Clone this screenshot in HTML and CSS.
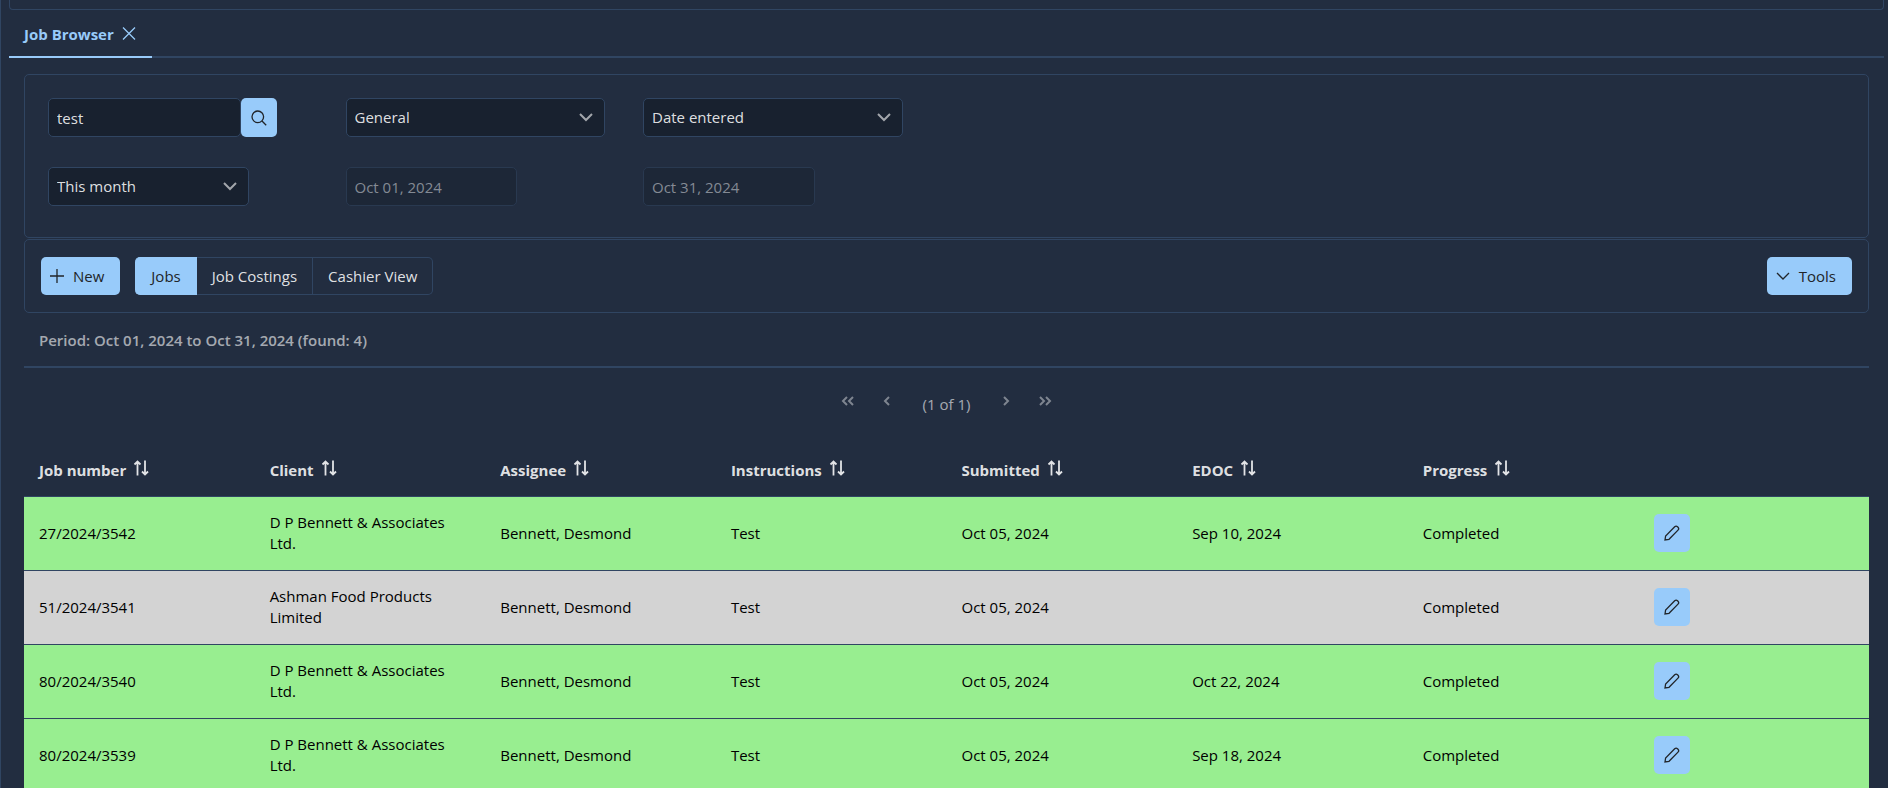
FILE: index.html
```html
<!DOCTYPE html>
<html lang="en">
<head>
<meta charset="utf-8">
<title>Job Browser</title>
<meta name="viewport" content="width=device-width, initial-scale=1">
<link rel="stylesheet" href="styles.css">
</head>
<body>
<svg class="sprite" aria-hidden="true">
  <symbol id="i-chevron" viewBox="0 0 16 16"><path d="M2 5l6 6 6-6"/></symbol>
  <symbol id="i-sort" viewBox="0 0 16 16"><path d="M4.500 15.500V2M1.500 4.500l3-3 3 3M12 .500V14M9 11.500l3 3 3-3"/></symbol>
  <symbol id="i-pencil" viewBox="0 0 16 16"><path d="M1 15l.6-4L10.700 1.800a2 2 0 0 1 2.800 0l.5.500a2 2 0 0 1 0 2.800L5 14.300z"/></symbol>
</svg>
<main class="app">
  <div class="menubar"></div>
  <nav class="tabs">
    <div class="tab">
      <a class="tab-link" href="#jobs">Job Browser</a>
      <button class="tab-close" type="button" aria-label="Close tab"><svg class="icon" viewBox="0 0 16 16"><path d="M2 1.500l12 12M14 1.500l-12 12"/></svg></button>
    </div>
  </nav>
  <section class="content" id="jobs">
    <form class="panel filters">
      <div class="field search">
        <input class="control" type="text" value="test" aria-label="Search text">
        <button class="btn btn-icon" type="button" aria-label="Search"><svg class="icon" viewBox="0 0 16 16"><circle cx="6.800" cy="6.800" r="5.800"/><path d="M11 11l4.200 4.200"/></svg></button>
      </div>
      <div class="field select">
        <select class="control" aria-label="Search type"><option>General</option></select>
        <svg class="icon chevron"><use href="#i-chevron"/></svg>
      </div>
      <div class="field select">
        <select class="control" aria-label="Date field"><option>Date entered</option></select>
        <svg class="icon chevron"><use href="#i-chevron"/></svg>
      </div>
      <div class="field select period">
        <select class="control" aria-label="Period"><option>This month</option></select>
        <svg class="icon chevron"><use href="#i-chevron"/></svg>
      </div>
      <div class="field date"><input class="control" type="text" value="Oct 01, 2024" aria-label="Start date" disabled></div>
      <div class="field date"><input class="control" type="text" value="Oct 31, 2024" aria-label="End date" disabled></div>
    </form>
    <div class="panel toolbar">
      <button class="btn" type="button"><svg class="icon" viewBox="0 0 16 16"><path d="M8 1v14M1 8h14"/></svg><span class="label">New</span></button>
      <div class="segments">
        <button class="segment active" type="button">Jobs</button>
        <button class="segment" type="button">Job Costings</button>
        <button class="segment" type="button">Cashier View</button>
      </div>
      <button class="btn tools" type="button"><svg class="icon"><use href="#i-chevron"/></svg><span class="label">Tools</span></button>
    </div>
    <h2 class="summary">Period: Oct 01, 2024 to Oct 31, 2024 (found: 4)</h2>
    <div class="paginator">
      <button class="page" type="button" disabled aria-label="First page"><svg class="icon" viewBox="0 0 16 16"><path d="M7 4L3 8l4 4M13 4L9 8l4 4"/></svg></button>
      <button class="page" type="button" disabled aria-label="Previous page"><svg class="icon" viewBox="0 0 16 16"><path d="M10 4L6 8l4 4"/></svg></button>
      <span class="current">(1 of 1)</span>
      <button class="page" type="button" disabled aria-label="Next page"><svg class="icon" viewBox="0 0 16 16"><path d="M6 4l4 4-4 4"/></svg></button>
      <button class="page" type="button" disabled aria-label="Last page"><svg class="icon" viewBox="0 0 16 16"><path d="M3 4l4 4-4 4M9 4l4 4-4 4"/></svg></button>
    </div>
    <table class="jobs">
      <thead>
        <tr>
          <th>Job number<svg class="icon sort"><use href="#i-sort"/></svg></th>
          <th>Client<svg class="icon sort"><use href="#i-sort"/></svg></th>
          <th>Assignee<svg class="icon sort"><use href="#i-sort"/></svg></th>
          <th>Instructions<svg class="icon sort"><use href="#i-sort"/></svg></th>
          <th>Submitted<svg class="icon sort"><use href="#i-sort"/></svg></th>
          <th>EDOC<svg class="icon sort"><use href="#i-sort"/></svg></th>
          <th>Progress<svg class="icon sort"><use href="#i-sort"/></svg></th>
          <th></th>
        </tr>
      </thead>
      <tbody>
        <tr class="done">
          <td>27/2024/3542</td><td>D P Bennett &amp; Associates Ltd.</td><td>Bennett, Desmond</td><td>Test</td><td>Oct 05, 2024</td><td>Sep 10, 2024</td><td>Completed</td>
          <td><button class="btn btn-icon" type="button" aria-label="Edit job"><svg class="icon"><use href="#i-pencil"/></svg></button></td>
        </tr>
        <tr class="idle">
          <td>51/2024/3541</td><td>Ashman Food Products Limited</td><td>Bennett, Desmond</td><td>Test</td><td>Oct 05, 2024</td><td></td><td>Completed</td>
          <td><button class="btn btn-icon" type="button" aria-label="Edit job"><svg class="icon"><use href="#i-pencil"/></svg></button></td>
        </tr>
        <tr class="done">
          <td>80/2024/3540</td><td>D P Bennett &amp; Associates Ltd.</td><td>Bennett, Desmond</td><td>Test</td><td>Oct 05, 2024</td><td>Oct 22, 2024</td><td>Completed</td>
          <td><button class="btn btn-icon" type="button" aria-label="Edit job"><svg class="icon"><use href="#i-pencil"/></svg></button></td>
        </tr>
        <tr class="done">
          <td>80/2024/3539</td><td>D P Bennett &amp; Associates Ltd.</td><td>Bennett, Desmond</td><td>Test</td><td>Oct 05, 2024</td><td>Sep 18, 2024</td><td>Completed</td>
          <td><button class="btn btn-icon" type="button" aria-label="Edit job"><svg class="icon"><use href="#i-pencil"/></svg></button></td>
        </tr>
      </tbody>
    </table>
  </section>
</main>
</body>
</html>
```
FILE: styles.css
```css
:root {
  --bg: #222d40;
  --field: #18212f;
  --line: #304562;
  --accent: #98cbfa;
  --ink: #212529;
  --text: rgba(255, 255, 255, .87);
  --muted: rgba(255, 255, 255, .6);
}

* { box-sizing: border-box; }

body {
  margin: 0;
  background: var(--bg);
  color: var(--text);
  font: 15px/21px "Open Sans", "Noto Sans", sans-serif;
}

button, input, select { font: inherit; }
button { margin: 0; padding: 0; border: 0; background: none; color: inherit; }

.sprite { position: absolute; width: 0; height: 0; }

.icon {
  display: block;
  flex: none;
  width: 16px;
  height: 16px;
  fill: none;
  stroke: currentColor;
  stroke-width: 1.3;
}

.app {
  height: 100vh;
  overflow: hidden;
  padding: 0 4px 0 8px;
  border-left: 1px solid var(--line);
}

.menubar {
  height: 10px;
  border: 1px solid var(--line);
  border-top: 0;
  border-radius: 0 0 4px 4px;
}

.tabs { display: flex; border-bottom: 2px solid var(--line); }
.tab {
  display: flex;
  align-items: center;
  gap: 7px;
  height: 48px;
  margin-bottom: -2px;
  padding: 2px 15px 0;
  border-bottom: 2px solid var(--accent);
  color: var(--accent);
}
.tab-link { color: inherit; font-weight: 700; text-decoration: none; }

.content { padding: 16px 15px 0; }

.panel { border: 1px solid var(--line); border-radius: 5px; }

.filters {
  display: grid;
  grid-template-columns: repeat(6, 1fr);
  row-gap: 30px;
  padding: 23px 35px 31px 23px;
}
.field { position: relative; margin-right: 38px; }
.field:nth-child(3n + 1) { grid-column: 1; }
.search { display: flex; margin-right: 69px; }
.period { margin-right: 97px; }
.date { margin-right: 126px; }

.control {
  appearance: none;
  display: block;
  width: 100%;
  min-width: 0;
  height: 39px;
  padding: 0 8px;
  border: 1px solid var(--line);
  border-radius: 5px;
  background: var(--field);
  color: var(--text);
}
.control:disabled { border-color: #293950; background: #1d2737; color: #848a94; }
.chevron {
  position: absolute;
  top: 11px;
  right: 11px;
  color: var(--muted);
  stroke-width: 2;
}

.btn {
  display: inline-flex;
  align-items: center;
  gap: 8px;
  height: 38px;
  padding: 0 16px 0 8px;
  border-radius: 5px;
  background: var(--accent);
  color: var(--ink);
}
.btn-icon { flex: none; justify-content: center; width: 36px; padding: 0; }
.search .btn { height: 39px; }
.label { padding-top: 1px; }

.toolbar { display: flex; margin-top: 1px; padding: 17px 16px; }
.segments { display: flex; margin-left: 15px; }
.segment {
  height: 38px;
  padding: 1px 15px 0;
  border: 1px solid var(--line);
  border-left-width: 0;
}
.segment:first-child { padding-left: 16px; border-radius: 5px 0 0 5px; }
.segment:last-child { border-radius: 0 5px 5px 0; }
.segment.active { border-color: var(--accent); background: var(--accent); color: var(--ink); }
.tools { margin-left: auto; }

.summary {
  margin: 0;
  padding: 17px 15px 15px;
  border-bottom: 2px solid var(--line);
  color: var(--muted);
  font-size: 15px;
  font-weight: 600;
}

.paginator {
  display: flex;
  align-items: center;
  justify-content: center;
  gap: 3px;
  height: 78px;
  padding-bottom: 12px;
  color: var(--muted);
}
.page { display: flex; justify-content: center; width: 36px; opacity: .7; }
.page .icon { stroke-width: 2; }
.current { padding: 6px 15px 0; }

.jobs { width: 100%; table-layout: fixed; border-spacing: 0; }
.jobs th, .jobs td {
  padding: 15px 15px 16px;
  border-bottom: 1px solid var(--line);
  text-align: left;
}
.jobs th { padding-top: 14px; padding-bottom: 15px; font-weight: 700; }
.jobs td { color: #000; }
.jobs td:last-child { padding-left: 16px; }
.jobs .btn { display: flex; }
.sort { display: inline-block; margin-left: 7px; stroke-width: 1.8; }
.done { background: #98ee90; }
.idle { background: #d3d3d3; }
```
